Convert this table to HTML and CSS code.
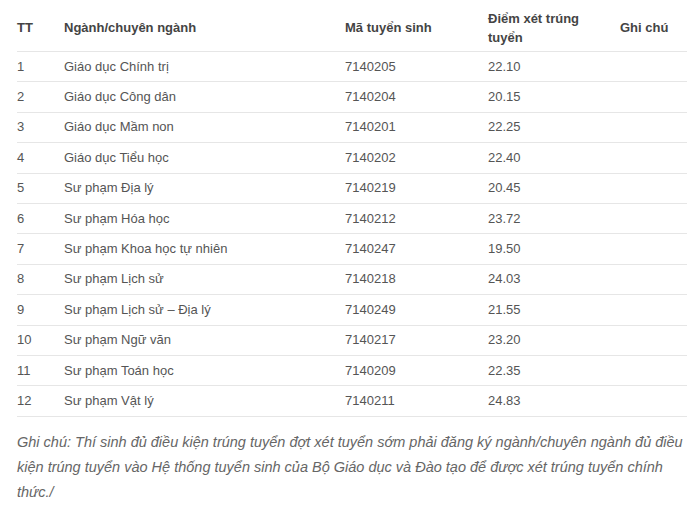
FILE: index.html
```html
<!DOCTYPE html>
<html lang="vi">
<head>
<meta charset="utf-8">
<link rel="stylesheet" href="styles.css">
</head>
<body>
<div class="page">
<table class="scores">
<colgroup>
<col class="c-tt"><col class="c-name"><col class="c-code"><col class="c-score"><col class="c-note">
</colgroup>
<thead>
<tr><th>TT</th><th>Ngành/chuyên ngành</th><th>Mã tuyển sinh</th><th>Điểm xét trúng tuyển</th><th>Ghi chú</th></tr>
</thead>
<tbody>
<tr><td>1</td><td>Giáo dục Chính trị</td><td>7140205</td><td>22.10</td><td></td></tr>
<tr><td>2</td><td>Giáo dục Công dân</td><td>7140204</td><td>20.15</td><td></td></tr>
<tr><td>3</td><td>Giáo dục Mầm non</td><td>7140201</td><td>22.25</td><td></td></tr>
<tr><td>4</td><td>Giáo dục Tiểu học</td><td>7140202</td><td>22.40</td><td></td></tr>
<tr><td>5</td><td>Sư phạm Địa lý</td><td>7140219</td><td>20.45</td><td></td></tr>
<tr><td>6</td><td>Sư phạm Hóa học</td><td>7140212</td><td>23.72</td><td></td></tr>
<tr><td>7</td><td>Sư phạm Khoa học tự nhiên</td><td>7140247</td><td>19.50</td><td></td></tr>
<tr><td>8</td><td>Sư phạm Lịch sử</td><td>7140218</td><td>24.03</td><td></td></tr>
<tr><td>9</td><td>Sư phạm Lịch sử – Địa lý</td><td>7140249</td><td>21.55</td><td></td></tr>
<tr><td>10</td><td>Sư phạm Ngữ văn</td><td>7140217</td><td>23.20</td><td></td></tr>
<tr><td>11</td><td>Sư phạm Toán học</td><td>7140209</td><td>22.35</td><td></td></tr>
<tr><td>12</td><td>Sư phạm Vật lý</td><td>7140211</td><td>24.83</td><td></td></tr>
</tbody>
</table>
<p class="note">Ghi chú: Thí sinh đủ điều kiện trúng tuyển đợt xét tuyển sớm phải đăng ký ngành/chuyên ngành đủ điều kiện trúng tuyển vào Hệ thống tuyển sinh của Bộ Giáo dục và Đào tạo để được xét trúng tuyển chính thức./</p>
</div>
</body>
</html>
```
FILE: styles.css
```css
html, body {
  margin: 0;
  padding: 0;
  background: #ffffff;
}
body {
  font-family: "Liberation Sans", Arial, sans-serif;
  color: #555555;
}
.page {
  padding: 0 13px 0 17px;
}
.scores {
  width: 670px;
  border-collapse: collapse;
  table-layout: fixed;
  font-size: 13px;
}
.c-tt { width: 47px; }
.c-name { width: 281px; }
.c-code { width: 143px; }
.c-score { width: 132px; }
.c-note { width: 67px; }
.scores th {
  text-align: left;
  font-weight: bold;
  color: #444444;
  height: 47px;
  padding: 4px 10px 0 0;
  line-height: 19px;
  vertical-align: middle;
  border-bottom: 1px solid #e6e6e6;
}
.scores td {
  height: 29.4px;
  padding: 0;
  line-height: 18px;
  vertical-align: middle;
  border-bottom: 1px solid #e6e6e6;
}
.note {
  margin: 13px 0 0 0;
  font-style: italic;
  font-size: 14.5px;
  line-height: 25px;
  color: #666666;
}
```
